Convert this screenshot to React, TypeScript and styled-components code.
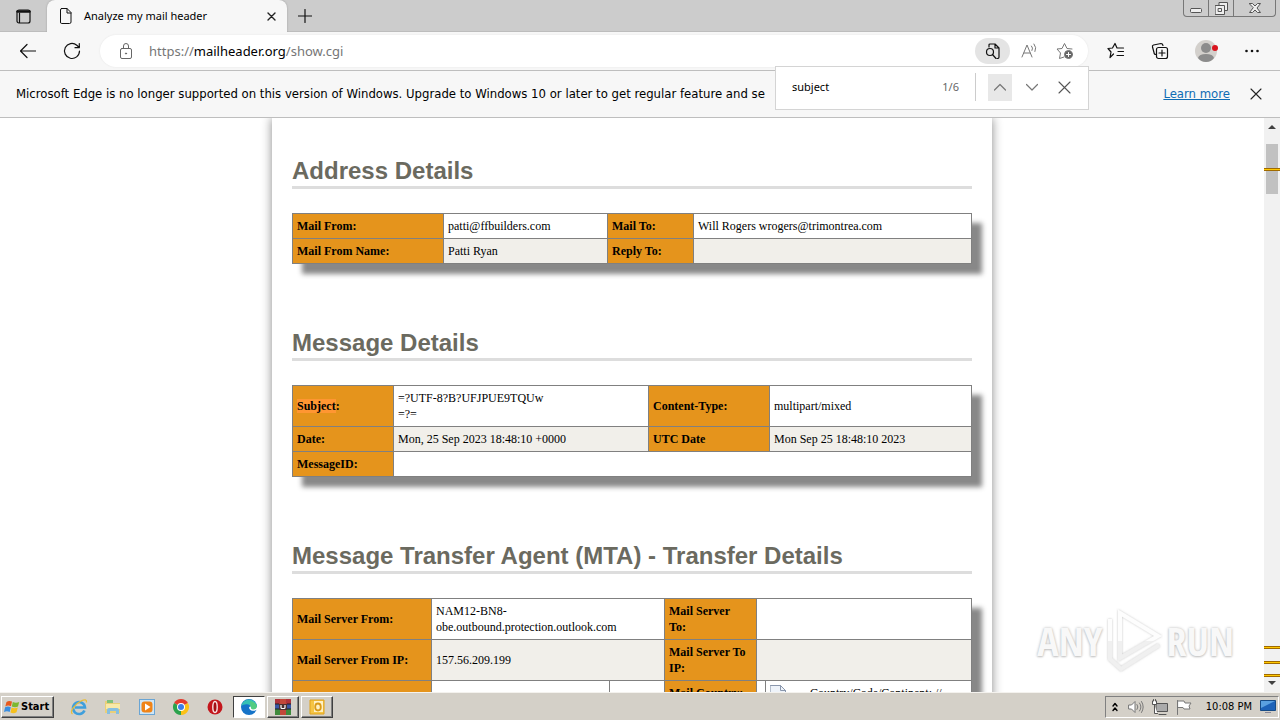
import React from "react";
import styled, { createGlobalStyle, css } from "styled-components";

const ui = '"Noto Sans", "Open Sans", sans-serif';
const serif = '"Liberation Serif", "Times New Roman", serif';
const arial = '"Liberation Sans", Arial, sans-serif';
const tahoma = '"DejaVu Sans Condensed", "DejaVu Sans", sans-serif';

const Global = createGlobalStyle`
  *, *::before, *::after { box-sizing: border-box; }
  body { margin: 0; background: #fff; overflow: hidden; }
  button, input { font: inherit; color: inherit; margin: 0; }
  svg { display: block; flex: none; }
`;

const Desktop = styled.div`
  display: flex;
  flex-direction: column;
  height: 100vh;
  font: 12px/16px ${ui};
  color: #000;
`;

/* ---------- tab strip ---------- */
const TabStrip = styled.header`
  display: flex;
  flex: none;
  height: 32px;
  background: #ccc;
  border-bottom: 1px solid #bdbdbd;
`;
const PlainButton = styled.button<{ $w: number; $h?: number }>`
  display: flex;
  align-items: center;
  justify-content: center;
  flex: none;
  width: ${(p) => p.$w}px;
  height: ${(p) => p.$h ?? 32}px;
  padding: 0;
  border: 0;
  background: none;
`;
const Tab = styled.div`
  display: flex;
  align-items: center;
  flex: none;
  width: 240px;
  height: 32px;
  padding-left: 12px;
  border-radius: 8px 8px 0 0;
  background: #f7f7f7;
  box-shadow: 0 0 2px #999;
  clip-path: inset(-3px -3px 0 -3px);
`;
const TabTitle = styled.span`
  flex: 1;
  padding-left: 11px;
  font-size: 11px;
  white-space: nowrap;
`;
const WindowButtons = styled.div`
  display: flex;
  height: 17px;
  margin: 0 4px 0 auto;
  border: 1px solid #777;
  border-top: 0;
  border-radius: 0 0 4px 4px;
`;
const WindowButton = styled.button<{ $w: number }>`
  display: flex;
  align-items: center;
  justify-content: center;
  width: ${(p) => p.$w}px;
  padding: 0;
  border: 0;
  background: none;
  & + & { border-left: 1px solid #777; }
`;

/* ---------- toolbar ---------- */
const Toolbar = styled.div`
  position: relative;
  display: flex;
  align-items: center;
  flex: none;
  height: 39px;
  padding: 0 6px;
  background: #f7f7f7;
  border-bottom: 1px solid #bebebe;
`;
const AddressBar = styled.div`
  display: flex;
  align-items: center;
  flex: 1;
  height: 32px;
  margin: 0 6px;
  padding: 0 6px 0 18px;
  border-radius: 16px;
  background: #fff;
  box-shadow: 0 0 2px #e4e4e4;
`;
const Url = styled.span`
  flex: 1;
  padding-left: 15px;
  font-size: 13px;
  color: #767676;
  b { font-weight: 400; color: #000; }
`;
const FindPill = styled(PlainButton)`
  border-radius: 13px;
  background: #e4e4e4;
`;
const FindBox = styled.form`
  position: absolute;
  z-index: 2;
  top: 34px;
  right: 191px;
  display: flex;
  align-items: center;
  width: 314px;
  height: 44px;
  padding: 0 12px 2px 16px;
  background: #fff;
  border: 1px solid #d4d4d4;
`;
const FindInput = styled.input`
  flex: 1;
  min-width: 0;
  padding: 0;
  border: 0;
  outline: 0;
  background: none;
  font-size: 11px;
`;
const FindCount = styled.span`
  padding-right: 16px;
  font-size: 11px;
  color: #666;
`;
const FindDivider = styled.span`
  width: 1px;
  height: 28px;
  margin-right: 12px;
  background: #ccc;
`;
const FindButton = styled.button<{ $active?: boolean }>`
  display: flex;
  align-items: center;
  justify-content: center;
  width: 24px;
  height: 27px;
  margin-right: 8px;
  padding: 0;
  border: 0;
  background: ${(p) => (p.$active ? "#e8e8e8" : "none")};
  &:last-child { margin-right: 0; }
`;

/* ---------- notice ---------- */
const Notice = styled.div`
  display: flex;
  align-items: center;
  flex: none;
  height: 47px;
  padding: 0 8px 0 16px;
  background: #f7f7f7;
  border-bottom: 1px solid #bebebe;
  font: 13px/18px ${tahoma};
  white-space: nowrap;
`;
const NoticeText = styled.span`
  flex: 1;
  min-width: 0;
  overflow: hidden;
`;
const LearnMore = styled.a`
  padding: 0 10px 0 16px;
  color: #0f6cb4;
`;

/* ---------- page ---------- */
const Viewport = styled.div`
  position: relative;
  display: flex;
  flex: 1;
  min-height: 0;
  overflow: hidden;
`;
const PageArea = styled.main`
  flex: 1;
  overflow: hidden;
`;
const Sheet = styled.div`
  max-width: 720px;
  min-height: 100%;
  margin: 0 auto;
  padding: 38px 20px 0;
  background: #fff;
  box-shadow: 0 0 10px #888;
`;
const Section = styled.section`
  margin-bottom: 64px;
`;
const Heading = styled.h2`
  margin: 0 0 24px;
  border-bottom: 3px solid #ddd;
  font: bold 24px/30px ${arial};
  color: #6b6a5f;
`;
const DataTable = styled.table`
  width: 100%;
  table-layout: fixed;
  border-collapse: collapse;
  font: 12px/16px ${serif};
  box-shadow: 10px 10px 5px #888;
`;
const Col = styled.col<{ $w?: number }>`
  ${(p) => p.$w && css`width: ${p.$w}px;`}
`;
const Row = styled.tr<{ $alt?: boolean; $tall?: boolean }>`
  background: ${(p) => (p.$alt ? "#f1efea" : "#fff")};
  ${(p) => p.$tall && css`height: 57px;`}
`;
const Label = styled.th`
  height: 25px;
  padding: 4px;
  border: 1px solid #808080;
  background: #e5941c;
  text-align: left;
  vertical-align: middle;
`;
const TopLabel = styled(Label)`
  vertical-align: top;
`;
const Value = styled.td`
  padding: 4px;
  border: 1px solid #808080;
  vertical-align: middle;
`;
const MissingFlag = styled.td`
  padding: 4px;
  border: 1px solid #808080;
  vertical-align: top;
  div { display: flex; }
  span { flex: 1; padding-left: 24px; }
`;
const Found = styled.mark`
  background: #ff9632;
  color: inherit;
`;

/* ---------- scrollbar ---------- */
const Scrollbar = styled.div`
  position: relative;
  display: flex;
  flex-direction: column;
  align-items: center;
  justify-content: space-between;
  flex: none;
  width: 16px;
  padding: 6px 0;
  background: #f1f1f1;
`;
const Thumb = styled.div`
  width: 12px;
  height: 50px;
  margin: 14px 0 auto;
  background: #c1c1c1;
`;
const Tick = styled.i<{ $at: string }>`
  position: absolute;
  left: 0;
  top: ${(p) => p.$at};
  width: 16px;
  height: 3px;
  background: #ffc800;
  border: solid #a06a00;
  border-width: 1px 0;
`;
const Watermark = styled.div`
  position: absolute;
  right: 46px;
  bottom: 18px;
  display: flex;
  align-items: center;
  gap: 3px;
  font: 300 40px/48px "Liberation Sans Narrow", "Open Sans Condensed", "Roboto Condensed", Roboto, sans-serif;
  color: #f8f8f8;
  text-shadow: 0 0 3px #bbb, 0 1px 2px #ccc;
`;

/* ---------- taskbar ---------- */
const Taskbar = styled.footer`
  display: flex;
  align-items: center;
  flex: none;
  height: 28px;
  padding: 1px 1px 0;
  background: #d4d0c8;
  border-top: 1px solid #f4f2ee;
  font: 11px/14px ${tahoma};
`;
const raised = css`
  border: 1px solid;
  border-color: #fff #404040 #404040 #fff;
  box-shadow: inset -1px -1px 0 #808080;
`;
const StartButton = styled.button`
  ${raised}
  display: flex;
  align-items: center;
  gap: 1px;
  height: 22px;
  margin-right: 9px;
  width: 53px;
  padding: 0 2px;
  background: #d4d0c8;
  font-weight: 700;
`;
const TaskButton = styled.button<{ $state?: "open" | "active" }>`
  display: flex;
  align-items: center;
  justify-content: center;
  width: 32px;
  height: 22px;
  margin-right: 2px;
  padding: 0;
  border: 1px solid transparent;
  background: none;
  ${(p) => p.$state === "open" && raised}
  ${(p) =>
    p.$state === "active" &&
    css`
      background: #fff;
      border-color: #404040 #fff #fff #404040;
    `}
`;
const Tray = styled.div`
  display: flex;
  align-items: center;
  height: 22px;
  margin-left: auto;
  padding: 0 2px 0 6px;
  border: 1px solid;
  border-color: #808080 #fff #fff #808080;
`;
const Clock = styled.time`
  padding: 0 8px 0 4px;
`;

type StrokeProps = { size?: number; w?: number; color?: string; sw?: number; children: React.ReactNode };
const Ico = ({ size = 16, w, color = "#111", sw = 1, children }: StrokeProps) => (
  <svg width={w ?? size} height={size} viewBox={`0 0 ${w ?? size} ${size}`} fill="none" stroke={color}
    strokeWidth={sw} strokeLinecap="round" strokeLinejoin="round" aria-hidden="true">
    {children}
  </svg>
);

const CrossIcon = ({ size = 12, sw = 1.1, color = "#222" }) => (
  <Ico size={size} sw={sw} color={color}><path d={`M1 1L${size - 1} ${size - 1}M${size - 1} 1L1 ${size - 1}`} /></Ico>
);

const PlayLogo = () => (
  <svg width="58" height="66" viewBox="0 0 58 66" aria-hidden="true">
    <defs>
      <linearGradient id="wm" gradientUnits="userSpaceOnUse" x1="0" y1="0" x2="0" y2="66">
        <stop offset="0.5" stopColor="#fdfdfd" /><stop offset="0.5" stopColor="#f0f0f0" />
      </linearGradient>
      <filter id="glow" x="-10%" y="-10%" width="120%" height="120%">
        <feDropShadow dx="0" dy="0" stdDeviation="1.3" floodColor="#888" floodOpacity="0.5" />
      </filter>
    </defs>
    <g filter="url(#glow)" fill="none" stroke="url(#wm)" strokeWidth="4">
      <path d="M5 11V51L16 61 54 37" />
      <path d="M15 5L53 28 15 50z" />
    </g>
  </svg>
);

const StartLogo = () => (
  <svg width="16" height="16" viewBox="0 0 16 16" aria-hidden="true">
    <path d="M2.500 3Q5 1 8 2.600L7 7.200Q4 5.800 1.300 7.400z" fill="#e8591c" />
    <path d="M8.800 3Q12 4.500 15.200 3L14 7.600Q11 9 7.800 7.500z" fill="#7cb82f" />
    <path d="M1.100 8.300Q4 6.900 6.800 8.300L5.700 13Q3 11.600 0 13z" fill="#3a8ee0" />
    <path d="M7.600 8.600Q10.500 10 13.800 8.600L12.500 13.300Q9.500 15 6.500 13.400z" fill="#f6c01c" />
  </svg>
);
const IeIcon = () => (
  <svg width="18" height="18" viewBox="0 0 18 18" fill="none" aria-hidden="true">
    <path d="M14.500 12.500A6 6 0 1 1 15 9.500H5" stroke="#3f9fdc" strokeWidth="2.600" />
    <path d="M2.500 16C-1 14 5 6 11 3Q17 0 16.500 4.500" stroke="#e9bd3a" strokeWidth="1.300" />
  </svg>
);
const FolderIcon = () => (
  <svg width="18" height="18" viewBox="0 0 18 18" aria-hidden="true">
    <path d="M1 3h6l1 2h8v10H1z" fill="#e9cf78" /><path d="M3 2h6v3H3z" fill="#7fc17a" />
    <path d="M2 6h14v5H2z" fill="#f8e9a8" />
    <path d="M3 16v-4q0-2 2-2h8q2 0 2 2v4h-3v-3H6v3z" fill="#86bfe0" />
  </svg>
);
const PlayerIcon = () => (
  <svg width="18" height="18" viewBox="0 0 18 18" aria-hidden="true">
    <rect x="1.500" y="1.500" width="15" height="15" fill="#cfe6f6" stroke="#6aa5d4" />
    <rect x="3.500" y="3.500" width="11" height="11" rx="3" fill="#f08418" /><path d="M7 5.500L12.500 9 7 12.500z" fill="#fff" />
  </svg>
);
const ChromeIcon = () => (
  <svg width="18" height="18" viewBox="0 0 18 18" aria-hidden="true">
    <path d="M9 9L2.070 5A8 8 0 0 1 15.930 5z" fill="#e33b2e" />
    <path d="M9 9L15.930 5A8 8 0 0 1 9 17z" fill="#fbc116" />
    <path d="M9 9L9 17A8 8 0 0 1 2.070 5z" fill="#2ba24c" />
    <circle cx="9" cy="9" r="4" fill="#fff" /><circle cx="9" cy="9" r="3" fill="#3b7de8" />
  </svg>
);
const OperaIcon = () => (
  <svg width="18" height="18" viewBox="0 0 18 18" aria-hidden="true">
    <circle cx="9" cy="9" r="7.500" fill="#c4161c" /><ellipse cx="9" cy="9" rx="2.200" ry="5.500" fill="#a50f14" stroke="#f8e4e4" strokeWidth="1.400" />
  </svg>
);
const EdgeIcon = () => (
  <svg width="18" height="18" viewBox="0 0 18 18" aria-hidden="true">
    <circle cx="9" cy="9" r="8" fill="#1573c8" />
    <path d="M1.200 8A8 8 0 0 1 17 8.500Q17 12 13 12 10 12 10.500 10 11 6.500 7 6.200 3 6 1.200 8z" fill="#35c1b5" />
    <path d="M10 3Q16 4 17 8.500 17 12 13 12 10 12 10.500 10z" fill="#5fd06a" opacity="0.700" />
    <path d="M9 9.500Q9.500 12.500 12.500 12.800 15 13 17.500 11.500L17 9Q16 11.500 13 11.500 10.500 11.500 11 9.500 10.500 7.500 9 9.500z" fill="#fff" />
  </svg>
);
const RarIcon = () => (
  <svg width="20" height="18" viewBox="0 0 20 18" aria-hidden="true">
    <path d="M2 1h16v5H2z" fill="#b0323a" /><path d="M2 6h16v5H2z" fill="#3a55a4" /><path d="M2 11h16v6H2z" fill="#3f8a3c" />
    <path d="M7 1h6v16H7z" fill="#c2483a" /><path d="M6 6h8v6H6z" fill="#4a3030" />
    <path d="M8 7v2.500q0 1 1 1h2q1 0 1-1V7" fill="none" stroke="#fff" strokeWidth="1.200" />
    <path d="M2 6h4M14 6h4M2 11h4M14 11h4" stroke="#222" />
  </svg>
);
const OutlookIcon = () => (
  <svg width="18" height="18" viewBox="0 0 18 18" aria-hidden="true">
    <path d="M2 2h14v14H2z" fill="#f6c544" stroke="#e0a21c" /><path d="M6 3h9v11H6z" fill="#fff1c4" />
    <ellipse cx="10" cy="9" rx="2.800" ry="3.500" fill="none" stroke="#d99a18" strokeWidth="1.800" />
  </svg>
);

const taskItems: { name: string; icon: React.ReactNode; state?: "open" | "active" }[] = [
  { name: "Internet Explorer", icon: <IeIcon /> },
  { name: "Explorer", icon: <FolderIcon /> },
  { name: "Media Player", icon: <PlayerIcon /> },
  { name: "Chrome", icon: <ChromeIcon /> },
  { name: "Opera", icon: <OperaIcon /> },
  { name: "Edge", icon: <EdgeIcon />, state: "active" },
  { name: "WinRAR", icon: <RarIcon />, state: "open" },
  { name: "Outlook", icon: <OutlookIcon />, state: "open" },
];

export default function App() {
  return (
    <Desktop>
      <Global />
      <TabStrip>
        <PlainButton $w={47} aria-label="Tab actions">
          <Ico size={15} sw={1.2}><rect x="1" y="1" width="13" height="13" rx="2" /><path d="M1.500 2.500h12" strokeWidth="2.400" /><path d="M3.500 4v9.500" strokeWidth="1.200" /></Ico>
        </PlainButton>
        <Tab>
          <Ico size={16} w={14}><path d="M2.500.500h5.500l4 4v9.500q0 1.500-1.500 1.500h-8Q1.500 15.500 1.500 14V2Q1.500.500 2.500.500zM8 .500V5h4" /></Ico>
          <TabTitle>Analyze my mail header</TabTitle>
          <PlainButton $w={32} aria-label="Close tab"><CrossIcon size={9} sw={1.4} /></PlainButton>
        </Tab>
        <PlainButton $w={35} aria-label="New tab"><Ico size={14} sw={1.2}><path d="M7 .500v13M.500 7h13" /></Ico></PlainButton>
        <WindowButtons>
          <WindowButton $w={24} aria-label="Minimize"><Ico size={12} color="#555"><rect x=".500" y="6.500" width="11" height="4" rx="1" fill="#eee" /></Ico></WindowButton>
          <WindowButton $w={25} aria-label="Restore"><Ico size={13} color="#555"><path d="M4 3.500v-3h8.500v8h-3" fill="#eee" /><rect x=".500" y="3.500" width="9" height="9" fill="#eee" /><rect x="3.500" y="6.500" width="3" height="3" /></Ico></WindowButton>
          <WindowButton $w={42} aria-label="Close"><Ico size={10} w={12} color="#555"><path d="M.500.500h3L6 3 8.500.500h3L8 5l3.500 4.500h-3L6 7 3.500 9.500h-3L4 5z" fill="#eee" /></Ico></WindowButton>
        </WindowButtons>
      </TabStrip>

      <Toolbar>
        <PlainButton $w={44} aria-label="Back"><Ico size={16} sw={1.2}><path d="M15.500 8H.500M7 1.500L.500 8 7 14.500" /></Ico></PlainButton>
        <PlainButton $w={44} aria-label="Refresh"><Ico size={18} sw={1.2}><path d="M16.500 9A7.500 7.500 0 1 1 13.800 3.200L16.300 5.500M16.300 1.500V5.700H12" /></Ico></PlainButton>
        <AddressBar>
          <Ico size={16} color="#666"><rect x="2.500" y="5.500" width="11" height="10" rx="1.500" /><path d="M5.500 5.500V3Q5.500.500 8 .500T10.500 3v2.500" /><circle cx="8" cy="10.500" r=".6" fill="#666" /></Ico>
          <Url>https://<b>mailheader.org</b>/show.cgi</Url>
          <FindPill $w={35} $h={26} aria-label="Find on page">
            <Ico size={16} sw={1.2}><path d="M4 4V2Q4 1 5 1h5l4 4v9q0 1.500-1.500 1.500H12M10 1v4h4" /><circle cx="5" cy="9" r="3.500" /><path d="M7.500 11.500L11 15.500" /></Ico>
          </FindPill>
          <PlainButton $w={38} aria-label="Read aloud"><Ico size={16} color="#777"><path d="M1 14L6 2l5 12M3 10h6M10.500 3q2 2 0.500 4.500M13 1q3 3.500 1 7.500" /></Ico></PlainButton>
          <PlainButton $w={34} aria-label="Add to favorites">
            <Ico size={18} color="#777"><path d="M8 15L3.500 16.500 4.500 11 1 7l5-.500L8.500 1.500 11 6.500l5 .500" /><circle cx="12.500" cy="12.500" r="4" fill="#666" /><path d="M12.500 10.500v4M10.500 12.500h4" stroke="#fff" /></Ico>
          </PlainButton>
        </AddressBar>
        <PlainButton $w={44} aria-label="Favorites"><Ico size={18} sw={1.2}><path d="M6.500 12L3 15.500 4 10 1 6.500l4.500-.500L8 1.500l2 4.500h6.500M11 9.500h5.500M10 13.500h6.500" /></Ico></PlainButton>
        <PlainButton $w={44} aria-label="Collections"><Ico size={18} sw={1.2}><path d="M5 12.500Q3 12.500 3 10.500L1.500 5Q1 3.500 2.500 3L10 1.500q1.500 0 2 2" /><rect x="5.500" y="5.500" width="11" height="11" rx="2" /><path d="M11 8v6M8 11h6" /></Ico></PlainButton>
        <PlainButton $w={48} aria-label="Profile">
          <svg width="24" height="24" viewBox="0 0 24 24" aria-hidden="true"><circle cx="12" cy="12" r="11" fill="#d3d0cc" /><circle cx="12" cy="9" r="5" fill="#8c8c8c" /><path d="M4 19q1-4 8-4t8 4q-3 4-8 4t-8-4z" fill="#8c8c8c" /><circle cx="21" cy="9" r="3" fill="#d9141e" /></svg>
        </PlainButton>
        <PlainButton $w={44} aria-label="Settings and more"><Ico size={14} sw={0}><circle cx="1.500" cy="7" r="1.300" fill="#111" /><circle cx="7" cy="7" r="1.300" fill="#111" /><circle cx="12.500" cy="7" r="1.300" fill="#111" /></Ico></PlainButton>
        <FindBox onSubmit={(e) => e.preventDefault()}>
          <FindInput aria-label="Find on page" defaultValue="subject" />
          <FindCount>1/6</FindCount>
          <FindDivider />
          <FindButton $active type="button" aria-label="Previous"><Ico size={12} color="#777" sw={1.2}><path d="M.500 9L6 3.500 11.500 9" /></Ico></FindButton>
          <FindButton type="button" aria-label="Next"><Ico size={12} color="#777" sw={1.2}><path d="M.500 3.500L6 9l5.500-5.500" /></Ico></FindButton>
          <FindButton type="button" aria-label="Close find"><CrossIcon size={13} color="#555" /></FindButton>
        </FindBox>
      </Toolbar>

      <Notice role="status">
        <NoticeText>Microsoft Edge is no longer supported on this version of Windows. Upgrade to Windows 10 or later to get regular feature and se</NoticeText>
        <LearnMore href="#learn">Learn more</LearnMore>
        <PlainButton $w={32} aria-label="Dismiss"><CrossIcon size={12} /></PlainButton>
      </Notice>

      <Viewport>
        <PageArea>
          <Sheet>
            <Section>
              <Heading>Address Details</Heading>
              <DataTable>
                <colgroup><Col $w={151} /><Col $w={164} /><Col $w={86} /><Col /></colgroup>
                <tbody>
                  <Row><Label>Mail From:</Label><Value>patti@ffbuilders.com</Value><Label>Mail To:</Label><Value>Will Rogers wrogers@trimontrea.com</Value></Row>
                  <Row $alt><Label>Mail From Name:</Label><Value>Patti Ryan</Value><Label>Reply To:</Label><Value /></Row>
                </tbody>
              </DataTable>
            </Section>
            <Section>
              <Heading>Message Details</Heading>
              <DataTable>
                <colgroup><Col $w={101} /><Col $w={255} /><Col $w={121} /><Col /></colgroup>
                <tbody>
                  <Row><Label><Found>Subject</Found>:</Label><Value>=?UTF-8?B?UFJPUE9TQUw<br />=?=</Value><Label>Content-Type:</Label><Value>multipart/mixed</Value></Row>
                  <Row $alt><Label>Date:</Label><Value>Mon, 25 Sep 2023 18:48:10 +0000</Value><Label>UTC Date</Label><Value>Mon Sep 25 18:48:10 2023</Value></Row>
                  <Row><Label>MessageID:</Label><Value colSpan={3} /></Row>
                </tbody>
              </DataTable>
            </Section>
            <Section>
              <Heading>Message Transfer Agent (MTA) - Transfer Details</Heading>
              <DataTable>
                <colgroup><Col $w={139} /><Col $w={178} /><Col $w={55} /><Col $w={92} /><Col $w={9} /><Col /></colgroup>
                <tbody>
                  <Row><Label>Mail Server From:</Label><Value colSpan={2}>NAM12-BN8-<br />obe.outbound.protection.outlook.com</Value><Label>Mail Server<br />To:</Label><Value colSpan={2} /></Row>
                  <Row $alt><Label>Mail Server From IP:</Label><Value colSpan={2}>157.56.209.199</Value><Label>Mail Server To<br />IP:</Label><Value colSpan={2} /></Row>
                  <Row $tall>
                    <Label /><Value /><Value /><TopLabel>Mail Country:</TopLabel><Value />
                    <MissingFlag>
                      <div>
                        <Ico size={16} color="#8a97ad"><path d="M.500.500h10l5 5v10H.500z" fill="#eef3fa" /><path d="M10.500.500v5h5" /><path d="M2 12l4-5 4 4" stroke="#4f9a4a" /></Ico>
                        <span>Country/Code/Continent: //</span>
                      </div>
                    </MissingFlag>
                  </Row>
                </tbody>
              </DataTable>
            </Section>
          </Sheet>
        </PageArea>
        <Scrollbar>
          <Ico size={6} w={10} color="none"><path d="M1 5L5 1l4 4z" fill="#404040" /></Ico>
          <Thumb />
          <Ico size={6} w={10} color="none"><path d="M1 1l4 4 4-4z" fill="#404040" /></Ico>
          <Tick $at="50px" /><Tick $at="calc(100% - 46px)" /><Tick $at="calc(100% - 31px)" /><Tick $at="calc(100% - 18px)" />
        </Scrollbar>
        <Watermark><span>ANY</span><PlayLogo /><span>RUN</span></Watermark>
      </Viewport>

      <Taskbar>
        <StartButton><StartLogo />Start</StartButton>
        {taskItems.map((t) => (
          <TaskButton key={t.name} $state={t.state} aria-label={t.name}>{t.icon}</TaskButton>
        ))}
        <Tray>
          <PlainButton $w={6} $h={20} aria-label="Show hidden icons"><Ico size={10} w={6} color="#000" sw={1.4}><path d="M1 4l2-2.500L5 4M1 8.500L3 6l2 2.500" /></Ico></PlainButton>
          <PlainButton $w={36} $h={20} aria-label="Volume"><Ico size={16} color="#777"><path d="M1 6h2.500L7 2.500v11L3.500 10H1z" fill="#fff" /><path d="M9 5.500q2 2.500 0 5M11.500 4q3 4 0 8M13.500 2.500q3.500 5.500 0 11" /></Ico></PlainButton>
          <PlainButton $w={12} $h={20} aria-label="Network"><Ico size={16} color="#555"><rect x="4.500" y="4.500" width="11" height="8" fill="#aaa" /><path d="M7 15.500h7M.500 2v3.500h4V2M1.500.500V2M3.500.500V2M2.500 6v8.500h3" fill="#fff" /></Ico></PlainButton>
          <PlainButton $w={36} $h={20} aria-label="Action center"><Ico size={16} color="#777"><path d="M1.500 1.500v14" /><path d="M2 2h6l1 2h6l-2 3 1 3H8L7 8.500H2z" fill="#fff" /></Ico></PlainButton>
          <Clock>10:08 PM</Clock>
          <PlainButton $w={16} $h={20} aria-label="Show desktop"><svg width="16" height="14" viewBox="0 0 16 14" aria-hidden="true"><path d="M.500.500h15v10H.500z" fill="#1d62b8" stroke="#164b86" /><path d="M1 1h14L1 8z" fill="#5aa0e0" /><path d="M5 12h6v1H5z" fill="#889" /></svg></PlainButton>
        </Tray>
      </Taskbar>
    </Desktop>
  );
}
